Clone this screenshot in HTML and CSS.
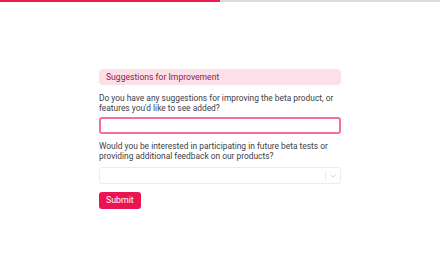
FILE: index.html
```html
<!DOCTYPE html>
<html>
<head>
<meta charset="utf-8">
<link rel="stylesheet" href="styles.css">
</head>
<body>
<div class="progress"><div class="progress-fill" style="width:50%"></div></div>
<main class="form">
  <div class="section-title">Suggestions for Improvement</div>
  <label class="question">Do you have any suggestions for improving the beta product, or features you'd like to see added?</label>
  <div class="text-input"></div>
  <label class="question q2">Would you be interested in participating in future beta tests or providing additional feedback on our products?</label>
  <div class="select">
    <span class="select-sep"></span>
    <svg class="chevron" width="6" height="4" viewBox="0 0 6 4"><path d="M0.6 0.8 L3 3.2 L5.4 0.8" fill="none" stroke="#c4c4c4" stroke-width="0.8"/></svg>
  </div>
  <button class="submit">Submit</button>
</main>
</body>
</html>
```
FILE: styles.css
```css
html, body { margin: 0; padding: 0; background: #fff; }
body { font-family: "Roboto", "Open Sans", sans-serif; width: 440px; height: 275px; overflow: hidden; }
.progress { height: 2px; background: #dcdcdc; }
.progress-fill { height: 100%; background: #ef1c52; }
.form { width: 242px; margin: 67px auto 0; display: flex; flex-direction: column; }
.section-title { background: #fde0e7; color: #8c1d3f; font-size: 8.6px; line-height: 16px; padding: 0 7px; border-radius: 4px; font-variant-ligatures: none; }
.question { color: #404048; font-size: 8.4px; line-height: 10px; margin-top: 8px; }
.text-input { margin-top: 4px; height: 13px; border: 2px solid #f4709a; border-radius: 3px; }
.q2 { margin-top: 7px; }
.select { margin-top: 6px; height: 15px; border: 1px solid #ececec; border-radius: 3px; display: flex; align-items: center; justify-content: flex-end; }
.select-sep { width: 1px; height: 10px; background: #ececec; }
.chevron { margin: 0 4px; }
.submit { align-self: flex-start; margin-top: 8px; height: 17px; padding: 0 7px; border: 0; border-radius: 3px; background: #ea1450; color: #fff; font-family: inherit; font-size: 8.8px; line-height: 17px; }
```
